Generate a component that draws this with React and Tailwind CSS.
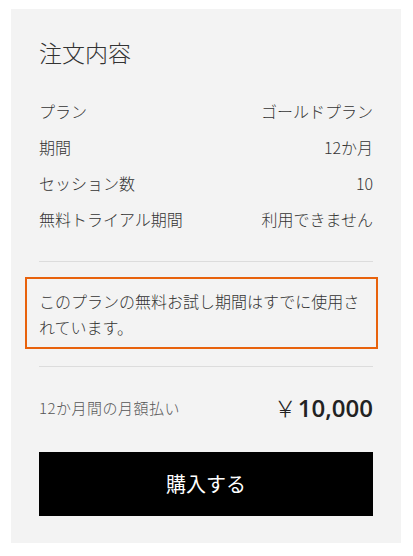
import React from 'react';

const ROWS = [
  { label: 'プラン', value: 'ゴールドプラン' },
  { label: '期間', value: '12か月' },
  { label: 'セッション数', value: '10' },
  { label: '無料トライアル期間', value: '利用できません' },
];

export default function App() {
  return (
    <div
      className="min-h-[556px] bg-white pt-[9px] px-[11px] text-[#333]"
      style={{ fontFamily: '"Noto Sans CJK JP", "Noto Sans", sans-serif' }}
    >
      <div className="w-[390px] bg-[#f3f3f3] px-[28px] pt-[29px] pb-[27px]">
        <h2 className="text-[23px] leading-[28px] font-light text-[#333]">注文内容</h2>

        <div className="mt-[27px]">
          {ROWS.map((row) => (
            <div key={row.label} className="flex justify-between items-center h-[36px] text-[16px] font-light">
              <span>{row.label}</span>
              <span>{row.value}</span>
            </div>
          ))}
        </div>

        <div className="mt-[24px] border-t border-[#dcdcdc]" />

        <div className="mt-[15px] ml-[-14px] mr-[-5px] border-2 border-[#e8620c] pl-[12px] pr-[8px] pt-[9px] pb-[7px] text-[16px] leading-[26px] font-light">
          このプランの無料お試し期間はすでに使用されています。
        </div>

        <div className="mt-[17px] border-t border-[#dcdcdc]" />

        <div className="mt-[25px] flex justify-between items-center h-[32px]">
          <span className="text-[15px] tracking-[0.5px] font-light text-[#555]">12か月間の月額払い</span>
          <span className="flex items-baseline text-[#222]">
            <span className="text-[23px] font-light mr-[1px]">￥</span>
            <span
              className="text-[24px] font-semibold"
              style={{ fontFamily: '"Open Sans", "Noto Sans", sans-serif' }}
            >
              10,000
            </span>
          </span>
        </div>

        <button className="mt-[28px] w-full h-[64px] bg-black text-white text-[20px]">
          購入する
        </button>
      </div>
    </div>
  );
}
